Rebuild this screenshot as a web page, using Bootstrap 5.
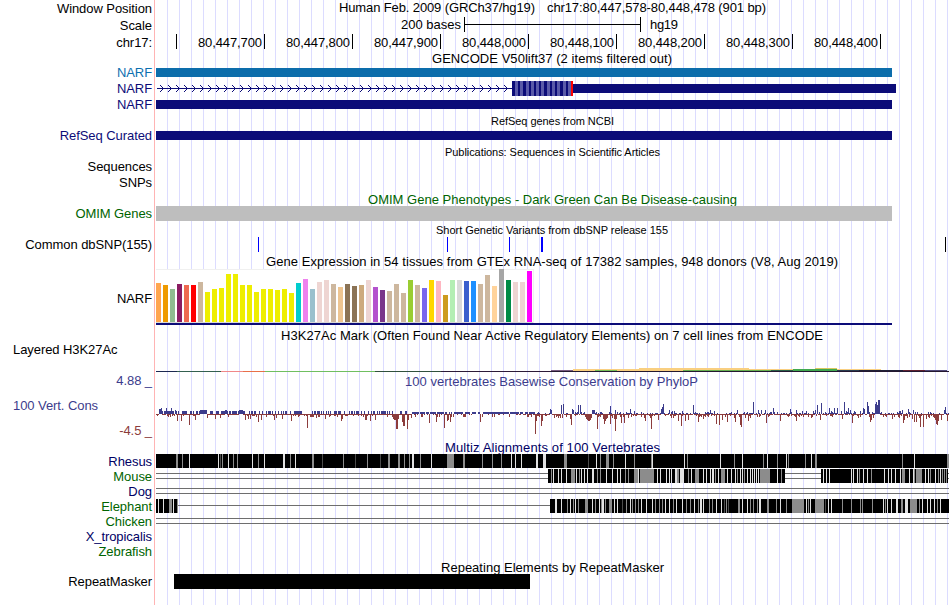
<!DOCTYPE html>
<html lang="en">
<head>
  <meta charset="UTF-8" />
  <meta name="viewport" content="width=device-width, initial-scale=1.0"/>
  <title>Genome Browser - chr17:80,447,578-80,448,478</title>
  <!-- Bootstrap CSS -->
  <link rel="stylesheet" href="https://cdn.jsdelivr.net/npm/bootstrap@5.3.0/dist/css/bootstrap.min.css" />
  <style>
    body { font-family: 'Liberation Sans', Arial, sans-serif; font-size: 13px; line-height: 15px; color: #000; background: #fff; }
    .browser {
      width: 950px; height: 605px; padding-top: 1px;
      background:
        linear-gradient(#ffb4b4, #ffb4b4) 154px 0 / 1px 100% no-repeat,
        repeating-linear-gradient(90deg, #dcdcff 0 1px, transparent 1px 12px) 167px 0 / 783px 100% no-repeat;
    }
    .track-label { width: 152px; margin-right: 2px; letter-spacing: -.07px; white-space: pre; }
    .track-label.side { padding-left: 13px; }
    .track-label.wiggle { padding-top: 1px; }
    .track-label.expr { padding-top: 22px; }
    .track-plot { width: 796px; overflow: visible; shape-rendering: crispEdges; }
    .track-plot text { font-size: 13px; white-space: pre; }
    .track-plot text.tiny { font-size: 11px; }
    .wiggle-label { height: 25px; }
    .c-blue { color: #0c6fb0; fill: #0c6fb0; }
    .c-navy { color: #0c0c78; fill: #0c0c78; }
    .c-green { color: #006400; fill: #006400; }
    .c-dark { color: #000064; fill: #000064; }
    .c-cons { color: #3c3c8c; fill: #3c3c8c; }
    .c-neg { color: #8c3c3c; fill: #8c3c3c; }
  </style>
</head>
<body>
  <main class="browser d-flex flex-column overflow-hidden" id="browser"></main>

  <script>
    const rect = (x, y, w, h, fill) => `<rect x="${x}" y="${y}" width="${w}" height="${h}" fill="${fill}"/>`;
    const text = (x, y, end, str, cls = '') =>
      `<text x="${x}" y="${y}" textLength="${end - x}" class="${cls}">${str}</text>`;

    // position ruler
    function ruler() {
      let out = rect(176, -1, 1, 15, '#000');
      for (let i = 0; i < 8; i++) {
        const x = 264 + i * 88;
        const pos = (80447700 + i * 100).toLocaleString('en-US');
        out += rect(x, -1, 1, 15, '#000') + text(x - 66, 12, x - 2, pos);
      }
      return out;
    }

    // intron with strand arrows, coding exon, UTR
    function gene() {
      let out = rect(157, 7, 355, 1, '#0c0c78');
      for (let x = 160; x < 508; x += 8) {
        for (let d = 0; d < 3; d++) {
          out += rect(x + d, 4 + d, 1, 1, '#0c0c78') + rect(x + d, 10 - d, 1, 1, '#0c0c78');
        }
      }
      out += rect(512, 0, 59, 15, '#0c0c78');
      for (let i = 0; i < 11; i++) out += rect(Math.round(515 + i * 5.28), 0, 3, 15, '#5a5aa8');
      return out + rect(571, 0, 2, 15, '#f00') + rect(573, 3, 323, 9, '#0c0c78');
    }

    const tissues = [
      ['#ffa54f', 39], ['#ee9a00', 37], ['#8fbc8f', 33], ['#8b1c62', 38], ['#ee6a50', 37], ['#ff0000', 37],
      ['#cdb79e', 40], ['#eeee00', 30], ['#eeee00', 33], ['#eeee00', 34], ['#eeee00', 48], ['#eeee00', 48],
      ['#eeee00', 37], ['#eeee00', 37], ['#eeee00', 30], ['#eeee00', 33], ['#eeee00', 33], ['#eeee00', 32],
      ['#eeee00', 33], ['#eeee00', 29], ['#00cdcd', 39], ['#ee82ee', 43], ['#9ac0cd', 33], ['#eed5d2', 40],
      ['#eed5d2', 42], ['#cdb79e', 38], ['#eec591', 35], ['#8b7355', 38], ['#8b7355', 36], ['#cdaa7d', 37],
      ['#eed5d2', 42], ['#b452cd', 35], ['#7a378b', 32], ['#cdb79e', 31], ['#cdb79e', 38], ['#cdb79e', 29],
      ['#9acd32', 42], ['#cdb79e', 37], ['#7a67ee', 34], ['#ffd700', 42], ['#ffb6c1', 41], ['#cd9b1d', 27],
      ['#b4eeb4', 42], ['#d9d9d9', 42], ['#3a5fcd', 41], ['#1e90ff', 41], ['#cdb79e', 38], ['#cdb79e', 47],
      ['#ffd39b', 36], ['#a6a6a6', 53], ['#008b45', 42], ['#eed5d2', 40], ['#eed5d2', 40], ['#ff00ff', 51]
    ];
    function expression() {
      let out = rect(156, 0, 378, 54, '#f0f0f0') + rect(156, 1, 377, 52, '#fff') + rect(156, 53, 377, 1, '#d8d8d8');
      tissues.forEach(([color, h], i) => out += rect(156 + i * 7, 53 - h, 5, h, color));
      return out + rect(156, 54, 736, 2, '#0c0c78');
    }

    function h3k27ac() {
      return [
        [156, 29, 21, 1, '#1c2850'], [177, 29, 44, 1, '#34604f'], [221, 29, 22, 1, '#f08888'],
        [243, 29, 22, 1, '#e87048'], [265, 29, 110, 1, '#70bf60'], [375, 29, 66, 1, '#30503c'],
        [441, 29, 110, 1, '#2c1a38'], [551, 28, 22, 1, '#785a80'], [573, 27, 66, 2, '#f9cf80'],
        [595, 28, 22, 1, '#78bf58'], [639, 26, 110, 2, '#f9cf80'], [639, 28, 44, 1, '#f9cf80'],
        [683, 28, 88, 1, '#68b050'], [749, 27, 44, 1, '#f9cf80'], [771, 28, 22, 1, '#2a6048'],
        [793, 27, 44, 2, '#40a850'], [815, 26, 22, 1, '#d8c860'], [837, 27, 44, 1, '#f9cf80'],
        [837, 28, 22, 1, '#283c50'], [859, 28, 44, 1, '#202038'], [903, 28, 22, 1, '#602030'],
        [925, 28, 22, 1, '#504878'], [551, 29, 398, 1, '#241830']
      ].map(r => rect(...r)).join('');
    }

    // x position -> score in pixels, for the strongly conserved / accelerated bases
    const peaks = {
      159: 5, 160: 5, 161: 6, 166: 6, 171: 6, 175: 4, 200: 4, 201: 4, 202: 4, 203: 4, 204: 4, 205: 4, 206: 4,
      225: 4, 226: 4, 239: 4, 240: 4, 241: 4, 242: 4, 550: 5, 551: 4, 561: 9, 563: 10, 572: 5, 573: 4, 578: 9,
      580: 9, 592: 4, 593: 4, 594: 4, 610: 8, 615: 4, 630: 5, 661: 5, 662: 7, 663: 10, 669: 4, 693: 9, 710: 4,
      737: 4, 753: 12, 758: 4, 761: 4, 765: 4, 773: 6, 790: 5, 796: 4, 815: 4, 817: 9, 821: 11, 829: 6, 834: 6,
      837: 6, 844: 12, 848: 6, 850: 4, 863: 6, 864: 5, 867: 12, 868: 8, 875: 10, 876: 12, 877: 9, 878: 14,
      879: 14, 902: 4, 908: 5, 913: 4, 944: 4, 945: 7
    };
    const dips = {
      177: 7, 181: 7, 189: 11, 195: 6, 207: 4, 215: 5, 220: 4, 245: 6, 248: 5, 250: 5, 258: 8, 261: 6, 274: 6,
      276: 4, 282: 5, 291: 7, 307: 14, 316: 4, 325: 5, 341: 7, 342: 5, 365: 6, 366: 6, 370: 7, 375: 6, 393: 5,
      394: 6, 395: 6, 396: 15, 397: 15, 398: 5, 402: 8, 403: 12, 404: 12, 407: 15, 408: 6, 411: 4, 429: 9,
      436: 8, 444: 14, 447: 7, 448: 6, 450: 8, 453: 3, 463: 3, 464: 3, 480: 8, 482: 3, 509: 3, 535: 20, 536: 7,
      541: 12, 542: 7, 554: 4, 570: 5, 571: 11, 585: 3, 586: 5, 587: 6, 588: 7, 589: 7, 590: 6, 591: 4, 597: 15,
      603: 5, 604: 10, 605: 7, 606: 5, 607: 4, 610: 10, 612: 4, 614: 5, 615: 17, 616: 5, 621: 9, 624: 9,
      644: 4, 645: 7, 651: 15, 658: 6, 673: 4, 678: 7, 681: 12, 685: 7, 688: 6, 698: 8, 703: 5, 716: 10,
      719: 11, 722: 6, 727: 8, 735: 8, 740: 11, 741: 13, 745: 4, 748: 7, 766: 9, 780: 7, 796: 7, 820: 6,
      842: 5, 852: 9, 858: 4, 870: 8, 871: 6, 892: 5, 903: 9, 904: 6, 907: 4, 912: 5, 914: 8, 916: 8, 920: 13,
      923: 13, 926: 5, 934: 4, 935: 6, 936: 10, 937: 11, 938: 7, 941: 6, 947: 7
    };
    function phyloP() {
      let out = text(405, 14, 698, '100 vertebrates Basewise Conservation by PhyloP', 'c-cons');
      let seed = 17;
      const rnd = () => (seed = (seed * 16807) % 2147483647) / 2147483647;
      for (let x = 156; x < 949; x++) {
        const a = rnd(), b = rnd();
        let up, down;
        if (x < 412) {
          up = a < .6 ? 3 : 0;
          down = b < .75 ? 1 : b < .9 ? 2 : 3;
        } else if (x < 536) {
          up = a < .92 ? 2 : 0;
          down = b < .3 ? 1 : b < .9 ? 0 : 3;
        } else {
          up = a < .4 ? 1 : a < .54 ? 2 : a < .6 ? 3 : 0;
          down = b < .65 ? 1 : b < .86 ? 2 : b < .96 ? 3 : 4;
        }
        if (x < 159) up = 0;
        if (peaks[x]) { up = peaks[x]; if (!dips[x]) down = 0; }
        if (dips[x]) { down = dips[x]; if (!peaks[x]) up = 0; }
        if (up) out += rect(x, 42 - up, 1, up, '#3c3c8c');
        if (down) out += rect(x, 42, 1, down, '#8c3c3c');
      }
      return out;
    }

    // alignment block; gaps are "offset" + shade (l light, g gray, d dark) + optional width
    function block(origin, x, w, gaps) {
      const shade = { l: '#e1e1e1', g: '#8c8c8c', d: '#4b4b4b' };
      return rect(x, 0, w, 14, '#000') + gaps.split(' ').map(g => {
        const [, off, s, n] = g.match(/(\d+)([lgd])(\d*)/);
        return rect(origin + +off, 0, n || 1, 14, shade[s]);
      }).join('');
    }
    const line = (y, x = 156, end = 949) => rect(x, y, end - x, 1, '#6e6e6e');

    const rhesus = () => block(0, 156, 793,
      '176g2 182g 189l 218l 220d 222g 228l 233g 237g 252l 258g 264l 283l2 290g 295l 312g2 322d 343g 355d 367g ' +
      '380d 388g2 398g2 404g 409g 412l2 420g 431l 447g7 463g2 482g 492g 501g 511l 515l 521l 536l2 543l3 564g3 ' +
      '588d 596l 600g 606g3 613g 625l 634g 651g 652l 684l 687g 720l 734g 742l 763g 767l 777g 786l 788g 805g ' +
      '811l 815g2 902g 914l 947g2');
    const mouse = () => line(4) + line(9) +
      block(470, 548, 237,
        '81g 83l 88l 91l 96l 101g4 106l 109g 111l 114l 117l 122l2 127g 130g 136l 142l 147l 150l 155g ' +
        '158g 164g4 168l 170g14 187l 190l 196l 199l 201l 205l2 207g2 210l4 218g 221l 225g4 233l 236l 240l ' +
        '242l2 245g 248l 251g4 257l 261l 265l 267g 270l 272l 274g 277l 280l 282l 284l 286l 288l ' +
        '290g10 307l 311g') +
      block(470, 821, 127,
        '353l 356l 359l 381l 383l 387l 389g 393l 397l 401g 414l 418l 421l 425l 430l 432g2 434g 439l 443l 444g ' +
        '446g3 449g 450g2 455l 458l 460g 465l 468g 470l 472g 474g 476g');
    const elephant = () => line(6, 178, 550) + block(156, 156, 22, '2l 7l 13g3 17l 21g') +
      block(470, 550, 399,
        '85l2 91l 97g 100l 103g 105l 108g 115g3 122l 125g 129l 131g 132l2 135g 139g3 144l 147l 152d 156g 160l ' +
        '162g 165g 168g 171l 176l 182l 185g 189g 192g 195l 199l 203g 206l 212l 216g 220g 224l 228g 230l2 233l ' +
        '239g 242g 246l 251l 254d 256g 258d 268g2 272l 277l 280g 283g 287g 289l2 297g2 306g 310l 316g 322g12 ' +
        '336l 338g 340l 345g9 355d 358l 361l 372g 381g 390g 392g 402g 413l 415g 417l 421l 426l2 431g2 435l3 ' +
        '440g7 449g 452l 457l 460l 464l 467g 470l');

    const title = (x, y, end, str, cls) => () => text(x, y, end, str, cls);
    const bar = (y, h, fill) => () => rect(156, y, 736, h, fill);

    // [height, label, label class, drawing]
    const rows = [
      [17, 'Window Position', '', () => text(339, 11, 535, 'Human Feb. 2009 (GRCh37/hg19)') +
        text(547, 11, 766, 'chr17:80,447,578-80,448,478 (901 bp)')],
      [17, 'Scale', '', () => text(401, 11, 461, '200 bases') + text(650, 11, 678, 'hg19') +
        rect(464, 6, 177, 1, '#000') + rect(464, -1, 1, 15, '#000') + rect(640, -1, 1, 15, '#000')],
      [16, 'chr17:', '', ruler],
      [14, '', '', title(432, 12, 672, 'GENCODE V50lift37 (2 items filtered out)')],
      [16, 'NARF', 'c-blue', bar(3, 9, '#0c6dab')],
      [16, 'NARF', 'c-navy', gene],
      [16, 'NARF', 'c-navy', bar(3, 9, '#0c0c78')],
      [15, '', '', title(491, 12, 614, 'RefSeq genes from NCBI', 'tiny')],
      [15, 'RefSeq Curated', 'c-navy', bar(3, 9, '#0c0c78')],
      [16, '', '', title(445, 13, 660, 'Publications: Sequences in Scientific Articles', 'tiny')],
      [16, 'Sequences', '', null],
      [16, 'SNPs', '', null],
      [15, '', '', title(368, 13, 737, 'OMIM Gene Phenotypes - Dark Green Can Be Disease-causing', 'c-green')],
      [15, 'OMIM Genes', 'c-green', bar(0, 15, '#bebebe')],
      [16, '', '', title(436, 13, 668, 'Short Genetic Variants from dbSNP release 155', 'tiny')],
      [15, 'Common dbSNP(155)', '', () => rect(258, 0, 1, 15, '#00f') + rect(447, 0, 1, 15, '#00f') +
        rect(509, 0, 1, 15, '#00f') + rect(541, 0, 2, 15, '#00f') + rect(945, 0, 1, 15, '#000')],
      [17, '', '', title(266, 14, 838, 'Gene Expression in 54 tissues from GTEx RNA-seq of 17382 samples, 948 donors (V8, Aug 2019)')],
      [56, 'NARF', 'expr', expression],
      [17, '', '', title(281, 15, 823, 'H3K27Ac Mark (Often Found Near Active Regulatory Elements) on 7 cell lines from ENCODE')],
      [30, 'Layered H3K27Ac', 'side', h3k27ac],
      [66, '<div class="wiggle-label text-end c-cons">4.88 _</div><div class="wiggle-label c-cons">100 Vert. Cons</div>' +
        '<div class="wiggle-label text-end c-neg">-4.5 _</div>', 'side wiggle', phyloP],
      [16, '', '', title(445, 14, 660, 'Multiz Alignments of 100 Vertebrates', 'c-dark')],
      [15, 'Rhesus', 'c-dark', rhesus],
      [15, 'Mouse', 'c-green', mouse],
      [15, 'Dog', 'c-dark', () => line(4) + line(9)],
      [15, 'Elephant', 'c-green', elephant],
      [15, 'Chicken', 'c-green', () => line(4) + line(9)],
      [15, 'X_tropicalis', 'c-dark', null],
      [15, 'Zebrafish', 'c-green', null],
      [15, '', '', title(441, 13, 664, 'Repeating Elements by RepeatMasker')],
      [31, 'RepeatMasker', '', () => rect(174, 0, 356, 15, '#000')]
    ];

    document.getElementById('browser').innerHTML = rows.map(([h, label, cls, draw]) => `
      <div class="d-flex flex-shrink-0" style="height:${h}px">
        <div class="track-label flex-shrink-0 ${cls.includes('side') ? 'text-start' : 'text-end'} ${cls}">${label}</div>
        <svg class="track-plot flex-shrink-0" height="${h}" viewBox="154 0 796 ${h}">${draw ? draw() : ''}</svg>
      </div>`).join('');
  </script>

  <!-- Bootstrap JS Bundle -->
  <script src="https://cdn.jsdelivr.net/npm/bootstrap@5.3.0/dist/js/bootstrap.bundle.min.js"></script>
</body>
</html>
